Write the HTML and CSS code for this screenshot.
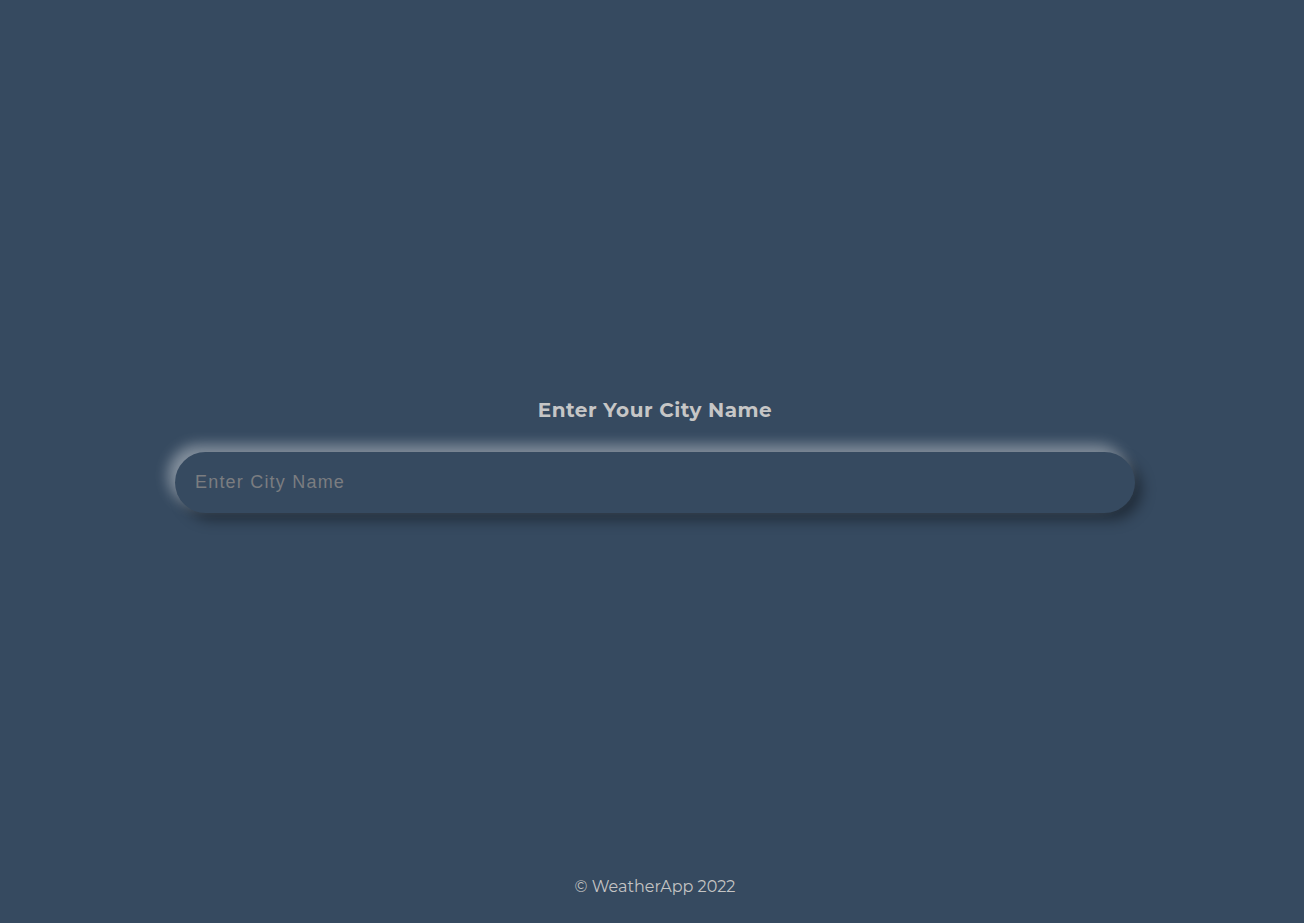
FILE: index.html
```html
<!DOCTYPE html>
<html lang="en">
<head>
<meta charset="utf-8">
<title>WeatherApp</title>
<link rel="stylesheet" href="styles.css">
</head>
<body>
<div class="page">
  <main class="main">
    <h2 class="title">Enter Your City Name</h2>
    <input class="city-input" type="text" placeholder="Enter City Name">
  </main>
  <footer class="footer">© WeatherApp 2022</footer>
</div>
</body>
</html>
```
FILE: styles.css
```css
* { box-sizing: border-box; }
html, body { margin: 0; padding: 0; }
body {
  background: #364a60;
  font-family: "Montserrat", "Noto Sans", "Open Sans", sans-serif;
  color: #c4c4c4;
}
.page {
  min-height: 100vh;
  display: flex;
  flex-direction: column;
  padding-left: 6px;
}
.main {
  flex: 1;
  display: flex;
  flex-direction: column;
  align-items: center;
  justify-content: center;
  padding-top: 34px;
}
.title {
  margin: 0 0 30px;
  font-size: 20px;
  font-weight: 700;
  color: #c6c6c6;
  letter-spacing: 0.5px;
}
.city-input {
  width: 960px;
  height: 61px;
  border: none;
  outline: none;
  border-radius: 31px;
  background: #364a60;
  padding: 0 20px;
  font-family: "Liberation Sans", Arial, sans-serif;
  font-size: 18px;
  letter-spacing: 1.2px;
  color: #c4c4c4;
  box-shadow: -7px -7px 14px rgba(255, 255, 255, 0.4), 7px 7px 14px rgba(0, 0, 0, 0.4);
}
.city-input::placeholder { color: #7b7d80; }
.footer {
  text-align: center;
  font-size: 16px;
  color: #c4c4c4;
  padding: 0 0 26px;
  line-height: 20px;
}
```
